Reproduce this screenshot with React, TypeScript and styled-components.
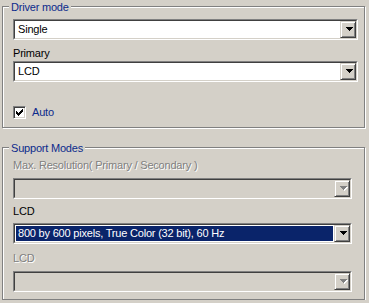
import styled, { createGlobalStyle } from 'styled-components';

const GlobalStyle = createGlobalStyle`
  html, body {
    margin: 0;
    background: #d4d0c8;
  }
  body {
    font: 11px "Liberation Sans", Arial, sans-serif;
    letter-spacing: -0.2px;
    color: #000;
  }
`;

const Page = styled.div`
  display: flex;
  flex-direction: column;
  gap: 19px;
  padding: 6px 0 0 2px;
`;

const Group = styled.section<{ $height: number; $padTop: number }>`
  position: relative;
  box-sizing: border-box;
  width: 363px;
  height: ${p => p.$height}px;
  padding: ${p => p.$padTop}px 0 0 10px;
  border: 1px solid #808080;
  box-shadow: 1px 1px 0 #fff, inset 1px 1px 0 #fff;
  display: flex;
  flex-direction: column;
  align-items: flex-start;
`;

const Caption = styled.span`
  position: absolute;
  top: -6px;
  left: 6px;
  padding: 0 2px;
  line-height: 13px;
  background: #d4d0c8;
  color: #0c2a8c;
`;

const Label = styled.div<{ $top: number; $disabled?: boolean }>`
  margin-top: ${p => p.$top}px;
  line-height: 13px;
  color: ${p => (p.$disabled ? '#808080' : '#000')};
  text-shadow: ${p => (p.$disabled ? '1px 1px 0 #fff' : 'none')};
`;

const ComboFrame = styled.div<{ $width: number; $top: number }>`
  box-sizing: border-box;
  width: ${p => p.$width}px;
  height: 21px;
  margin-top: ${p => p.$top}px;
  border: 1px solid;
  border-color: #808080 #fff #fff #808080;
  display: flex;
`;

const ComboInner = styled.div<{ $disabled?: boolean }>`
  flex: 1;
  display: flex;
  border: 1px solid;
  border-color: #404040 #d4d0c8 #d4d0c8 #404040;
  background: ${p => (p.$disabled ? '#d4d0c8' : '#fff')};
`;

const Value = styled.div<{ $selected?: boolean }>`
  flex: 1;
  margin: 1px;
  padding-left: 2px;
  line-height: 15px;
  white-space: nowrap;
  overflow: hidden;
  background: ${p => (p.$selected ? '#0a246a' : 'transparent')};
  color: ${p => (p.$selected ? '#fff' : '#000')};
`;

const DropButton = styled.div`
  box-sizing: border-box;
  width: 16px;
  height: 17px;
  padding: 5px 0 0 5px;
  border: 1px solid;
  border-color: #d4d0c8 #404040 #404040 #d4d0c8;
  box-shadow: inset 1px 1px 0 #fff, inset -1px -1px 0 #808080;
  background: #d4d0c8;
  display: flex;
  align-items: flex-start;
`;

const CheckRow = styled.div<{ $top: number }>`
  margin-top: ${p => p.$top}px;
  display: flex;
  align-items: center;
  gap: 6px;
  line-height: 13px;
  color: #0c2a8c;
`;

const CheckBox = styled.span`
  box-sizing: border-box;
  width: 13px;
  height: 13px;
  padding: 2px 0 0 2px;
  border: 1px solid;
  border-color: #808080 #fff #fff #808080;
  box-shadow: inset 1px 1px 0 #404040, inset -1px -1px 0 #d4d0c8;
  background: #fff;
  display: flex;
`;

const Arrow = ({ disabled }: { disabled?: boolean }) => {
  const d = 'M0 0h7v1H0zM1 1h5v1H1zM2 2h3v1H2zM3 3h1v1H3z';
  return (
    <svg width="8" height="5" viewBox="0 0 8 5" shapeRendering="crispEdges">
      {disabled && <path d={d} fill="#fff" transform="translate(1 1)" />}
      <path d={d} fill={disabled ? '#808080' : '#000'} />
    </svg>
  );
};

const Tick = () => (
  <svg width="7" height="7" viewBox="0 0 7 7" shapeRendering="crispEdges">
    <path
      d="M6 0h1v1H6zM5 1h2v1H5zM0 2h1v1H0zM4 2h3v1H4zM0 3h2v1H0zM3 3h3v1H3zM0 4h5v1H0zM1 5h3v1H1zM2 6h1v1H2z"
      fill="#000"
    />
  </svg>
);

type ComboProps = {
  width: number;
  top: number;
  value?: string;
  selected?: boolean;
  disabled?: boolean;
};

const Combo = ({ width, top, value, selected, disabled }: ComboProps) => (
  <ComboFrame $width={width} $top={top}>
    <ComboInner $disabled={disabled}>
      <Value $selected={selected}>{value}</Value>
      <DropButton>
        <Arrow disabled={disabled} />
      </DropButton>
    </ComboInner>
  </ComboFrame>
);

export default function App() {
  return (
    <>
      <GlobalStyle />
      <Page>
        <Group $height={122} $padTop={12}>
          <Caption>Driver mode</Caption>
          <Combo width={345} top={0} value="Single" />
          <Label $top={7}>Primary</Label>
          <Combo width={345} top={1} value="LCD" />
          <CheckRow $top={24}>
            <CheckBox>
              <Tick />
            </CheckBox>
            Auto
          </CheckRow>
        </Group>

        <Group $height={153} $padTop={11}>
          <Caption>Support Modes</Caption>
          <Label $top={0} $disabled>
            Max. Resolution( Primary / Secondary )
          </Label>
          <Combo width={339} top={6} disabled />
          <Label $top={6}>LCD</Label>
          <Combo width={339} top={5} value="800 by 600 pixels, True Color (32 bit), 60 Hz" selected />
          <Label $top={8} $disabled>
            LCD
          </Label>
          <Combo width={339} top={6} disabled />
        </Group>
      </Page>
    </>
  );
}
